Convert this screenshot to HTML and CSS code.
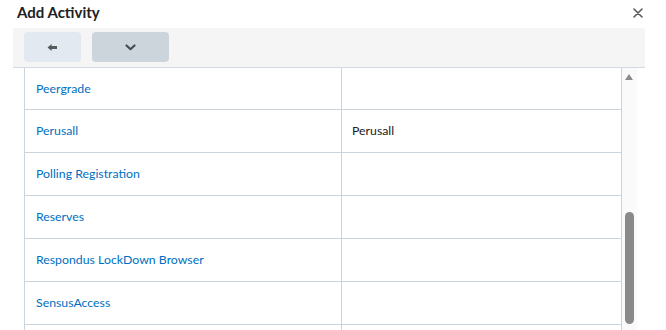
FILE: index.html
```html
<!DOCTYPE html>
<html lang="en">
<head>
    <meta charset="UTF-8">
    <meta name="viewport" content="width=device-width, initial-scale=1.0">
    <title>Add Activity</title>
    <link rel="stylesheet" href="styles.css">
</head>
<body>

    <div class="dialog">
        <!-- Dialog title -->
        <div class="dialog-header">
            <h1>Add Activity</h1>
            <button class="close-btn" aria-label="Close">
                <svg width="10" height="10" viewBox="0 0 10 10">
                    <path d="M1 1 L9 9 M9 1 L1 9" stroke="#565a5c" stroke-width="1.6" stroke-linecap="round"/>
                </svg>
            </button>
        </div>

        <!-- Toolbar with back and menu buttons -->
        <div class="toolbar">
            <button class="tool-btn back-btn" aria-label="Back">
                <svg width="11" height="9" viewBox="0 0 12 10">
                    <path d="M0.5 5 L5 1 L5 3.3 L11 3.3 L11 6.7 L5 6.7 L5 9 Z" fill="#565a5c"/>
                </svg>
            </button>
            <button class="tool-btn menu-btn" aria-label="More">
                <svg width="11" height="7" viewBox="0 0 11 7">
                    <path d="M1.5 1.5 L5.5 5.2 L9.5 1.5" fill="none" stroke="#494c4e" stroke-width="2.2" stroke-linecap="round" stroke-linejoin="round"/>
                </svg>
            </button>
        </div>

        <!-- Scrolled list of tools -->
        <div class="list-area">
            <table class="tool-table">
                <tbody>
                    <tr class="first-row">
                        <td><a href="#">Peergrade</a></td>
                        <td></td>
                    </tr>
                    <tr>
                        <td><a href="#">Perusall</a></td>
                        <td>Perusall</td>
                    </tr>
                    <tr>
                        <td><a href="#">Polling Registration</a></td>
                        <td></td>
                    </tr>
                    <tr>
                        <td><a href="#">Reserves</a></td>
                        <td></td>
                    </tr>
                    <tr>
                        <td><a href="#">Respondus LockDown Browser</a></td>
                        <td></td>
                    </tr>
                    <tr>
                        <td><a href="#">SensusAccess</a></td>
                        <td></td>
                    </tr>
                    <tr>
                        <td></td>
                        <td></td>
                    </tr>
                </tbody>
            </table>

            <div class="scrollbar">
                <div class="scroll-arrow"></div>
                <div class="scroll-thumb"></div>
            </div>
        </div>
    </div>

</body>
</html>
```

FILE: styles.css
```css
* {
    box-sizing: border-box;
    margin: 0;
    padding: 0;
}

body {
    font-family: 'Lato', 'Liberation Sans', sans-serif;
    background-color: #ffffff;
    color: #202122;
    overflow: hidden;
    height: 330px;
}

.dialog {
    width: 666px;
    height: 330px;
    overflow: hidden;
}

.dialog-header {
    display: flex;
    justify-content: space-between;
    align-items: center;
    height: 28px;
    padding: 0 23px 4px 17px;
}

h1 {
    font-size: 15px;
    font-weight: 700;
    color: #202122;
}

.close-btn {
    border: none;
    background: none;
    display: flex;
    align-items: center;
    margin-top: 1px;
}

.toolbar {
    display: flex;
    gap: 11px;
    margin: 0 21px 0 13px;
    padding: 4px 11px 4px;
    height: 40px;
    background-color: #f5f5f5;
    border-bottom: 1px solid #d3d9e3;
}

.tool-btn {
    height: 30px;
    border: none;
    border-radius: 4px;
    display: flex;
    align-items: center;
    justify-content: center;
    cursor: pointer;
}

.back-btn {
    width: 57px;
    background-color: #e3e9f1;
}

.menu-btn {
    width: 77px;
    background-color: #cdd5dc;
}

.list-area {
    display: flex;
    margin-left: 24px;
}

.tool-table {
    width: 598px;
    border-collapse: collapse;
    border-left: 1px solid #cdd5dc;
    border-right: 1px solid #cdd5dc;
    font-size: 12.3px;
}

.tool-table td {
    height: 43px;
    border-bottom: 1px solid #cdd5dc;
    vertical-align: middle;
    padding: 0 10px 0 10px;
    color: #202122;
}

.tool-table td:first-child {
    width: 317px;
    padding-left: 11px;
    border-right: 1px solid #cdd5dc;
}

.tool-table .first-row td {
    height: 41px;
}

.tool-table a {
    color: #006fbf;
    text-decoration: none;
}

.scrollbar {
    width: 15px;
    height: 263px;
    background-color: #fafafa;
}

.scroll-arrow {
    margin: 6px 0 0 3px;
    width: 0;
    height: 0;
    border-left: 4.5px solid transparent;
    border-right: 4.5px solid transparent;
    border-bottom: 6px solid #8a8a8a;
}

.scroll-thumb {
    margin: 132px 0 0 3px;
    width: 9px;
    height: 112px;
    border-radius: 5px;
    background-color: #8a8a8a;
}
```
